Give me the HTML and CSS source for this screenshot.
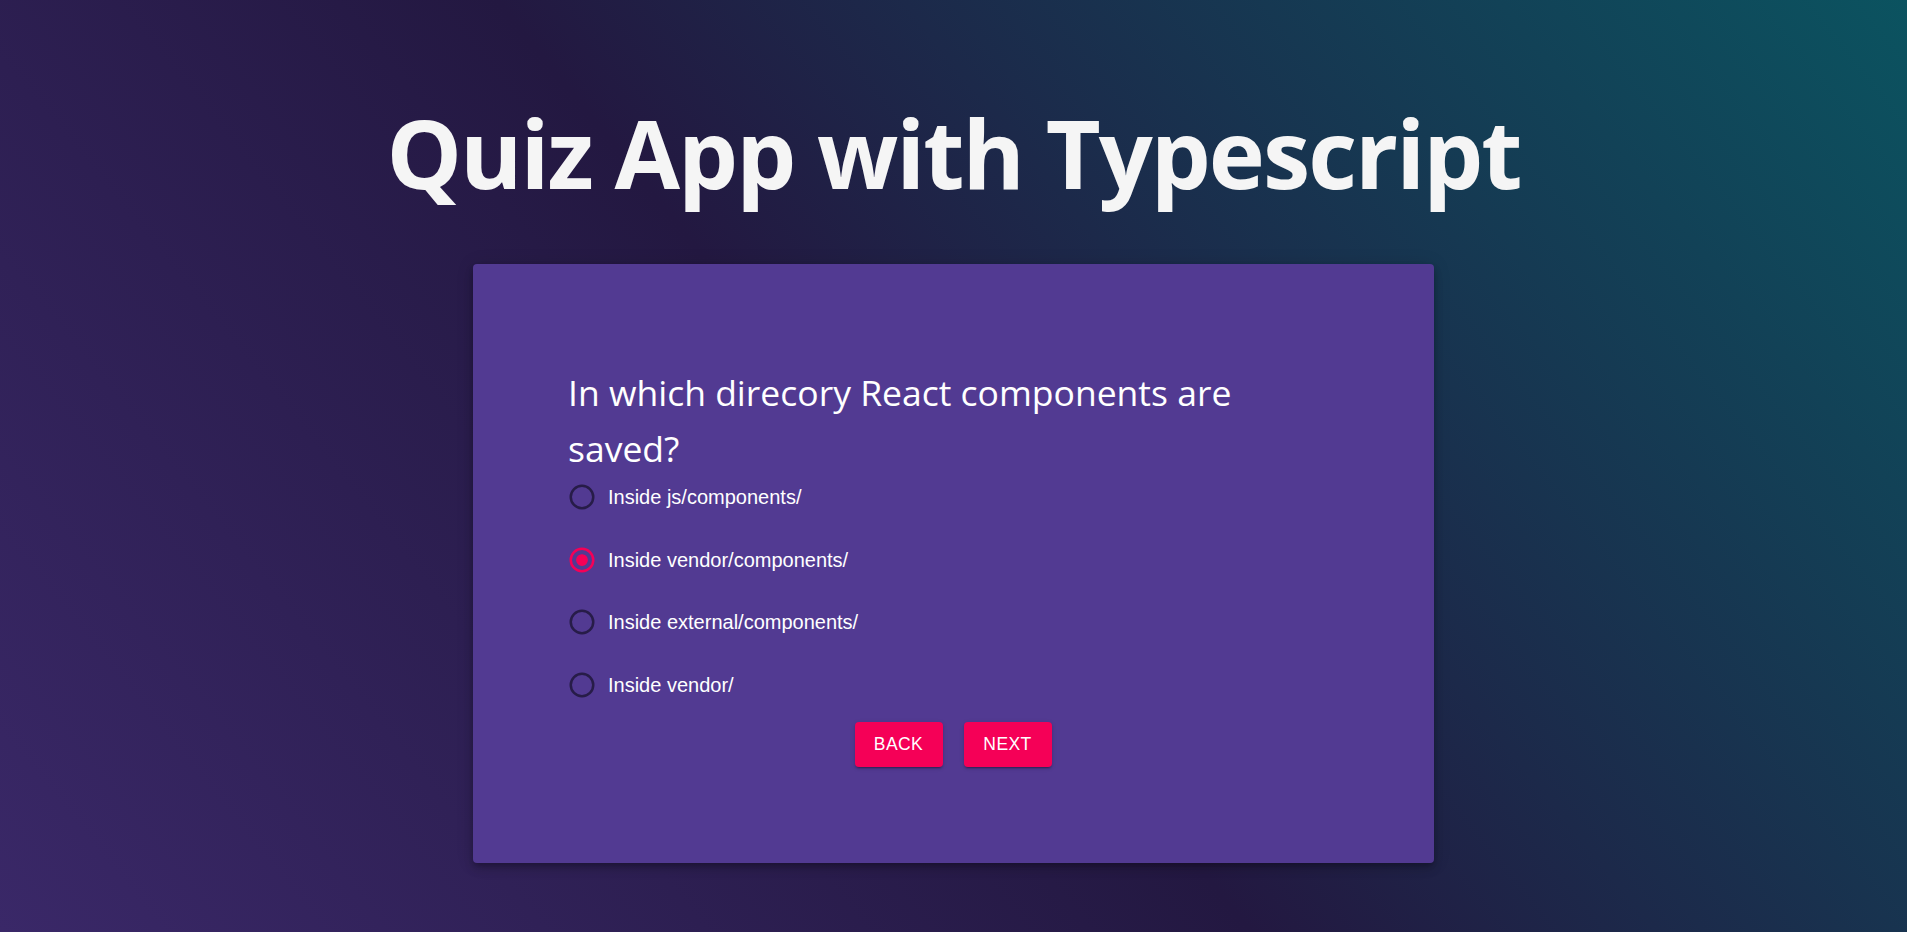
FILE: index.html
```html
<!DOCTYPE html>
<html lang="en">
<head>
<meta charset="utf-8">
<title>Quiz App with Typescript</title>
<link rel="stylesheet" href="styles.css">
</head>
<body>
<main class="page">
  <h1 class="title">Quiz App with Typescript</h1>
  <section class="card">
    <h2 class="question">In which direcory React components are saved?</h2>
    <div class="options">
      <label class="option">
        <svg class="radio" viewBox="0 0 24 24" width="30" height="30"><circle cx="12" cy="12" r="9" fill="none" stroke-width="2"/></svg>
        <span class="option-text">Inside js/components/</span>
      </label>
      <label class="option checked">
        <svg class="radio" viewBox="0 0 24 24" width="30" height="30"><circle cx="12" cy="12" r="9" fill="none" stroke-width="2"/><circle class="dot" cx="12" cy="12" r="4.2"/></svg>
        <span class="option-text">Inside vendor/components/</span>
      </label>
      <label class="option">
        <svg class="radio" viewBox="0 0 24 24" width="30" height="30"><circle cx="12" cy="12" r="9" fill="none" stroke-width="2"/></svg>
        <span class="option-text">Inside external/components/</span>
      </label>
      <label class="option">
        <svg class="radio" viewBox="0 0 24 24" width="30" height="30"><circle cx="12" cy="12" r="9" fill="none" stroke-width="2"/></svg>
        <span class="option-text">Inside vendor/</span>
      </label>
    </div>
    <div class="actions">
      <button class="btn">Back</button>
      <button class="btn">Next</button>
    </div>
  </section>
</main>
</body>
</html>
```

FILE: styles.css
```css
* { box-sizing: border-box; }
html, body { margin: 0; padding: 0; }
body {
  min-height: 100vh;
  background: linear-gradient(51deg, #3a2868 0%, #231841 47%, #0b5360 100%);
  font-family: "Liberation Sans", Arial, sans-serif;
  color: #fff;
}
.page {
  display: flex;
  flex-direction: column;
  align-items: center;
  min-height: 932px;
}
.title {
  margin: 96px 0 0 0;
  font-family: "Open Sans", "Noto Sans", sans-serif;
  font-weight: 700;
  font-size: 95px;
  line-height: 112px;
  color: #f5f5f5;
  letter-spacing: -2px;
}
.card {
  margin-top: 56px;
  width: 961px;
  padding: 96px 96px 96px 95px;
  background: #523a92;
  border-radius: 4px;
  box-shadow: 0 3px 5px -1px rgba(0,0,0,0.2), 0 6px 10px 0 rgba(0,0,0,0.14), 0 1px 18px 0 rgba(0,0,0,0.12);
}
.question {
  margin: 0;
  padding-top: 4px;
  width: 730px;
  font-family: "Open Sans", "Noto Sans", sans-serif;
  font-weight: 400;
  font-size: 35.5px;
  line-height: 56px;
  color: #fff;
}
.options {
  display: flex;
  flex-direction: column;
  gap: 10.5px;
  margin-top: -5px;
}
.option {
  display: flex;
  align-items: center;
  height: 52px;
  gap: 11px;
  padding-left: -0px;
}
.radio { display: block; flex: none; margin-left: -1px; }
.radio circle { stroke: #271c48; }
.option.checked .radio circle { stroke: #f50057; }
.radio .dot { fill: #f50057; stroke: none; }
.option-text {
  font-size: 20px;
  line-height: 30px;
  color: #fff;
}
.actions {
  display: flex;
  justify-content: center;
  gap: 21px;
  margin-top: 11.5px;
}
.btn {
  width: 88px;
  height: 45px;
  padding: 0;
  border: 0;
  border-radius: 4px;
  background: #f50057;
  color: #fff;
  font-family: "Liberation Sans", Arial, sans-serif;
  font-size: 17.5px;
  text-transform: uppercase;
  letter-spacing: 0.4px;
  box-shadow: 0 3px 1px -2px rgba(0,0,0,0.2), 0 2px 2px 0 rgba(0,0,0,0.14), 0 1px 5px 0 rgba(0,0,0,0.12);
}
```
